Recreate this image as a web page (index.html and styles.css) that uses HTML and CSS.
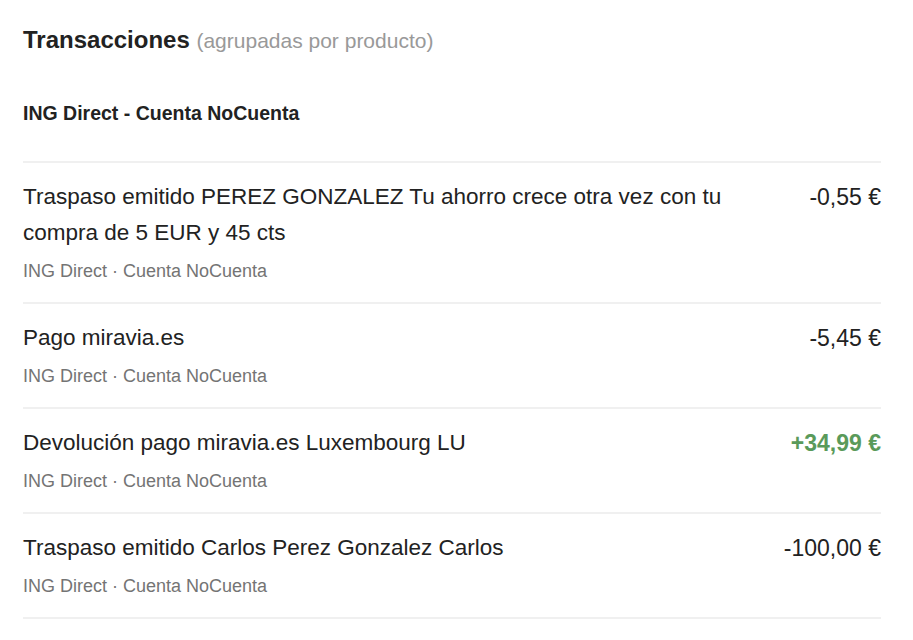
FILE: index.html
```html
<!doctype html>
<html lang="es">
    <head>
        <meta charset="UTF-8" />
        <meta name="viewport" content="width=device-width, initial-scale=1.0" />
        <title>Transacciones</title>
        <link rel="stylesheet" href="styles.css">
    </head>
    <body>
        <div class="container">
            <h2 class="title">
                Transacciones <span class="subtitle">(agrupadas por producto)</span>
            </h2>

            <div class="group">
                <h3 class="group-name">ING Direct - Cuenta NoCuenta</h3>

                <div class="tx-list">
                    <div class="tx">
                        <div class="tx-info">
                            <div class="tx-desc">
                                Traspaso emitido PEREZ GONZALEZ Tu ahorro crece otra vez con tu compra de 5 EUR y 45 cts
                            </div>
                            <div class="tx-meta">ING Direct · Cuenta NoCuenta</div>
                        </div>
                        <div class="tx-amount">-0,55 €</div>
                    </div>

                    <div class="tx">
                        <div class="tx-info">
                            <div class="tx-desc">Pago miravia.es</div>
                            <div class="tx-meta">ING Direct · Cuenta NoCuenta</div>
                        </div>
                        <div class="tx-amount">-5,45 €</div>
                    </div>

                    <div class="tx">
                        <div class="tx-info">
                            <div class="tx-desc">Devolución pago miravia.es Luxembourg LU</div>
                            <div class="tx-meta">ING Direct · Cuenta NoCuenta</div>
                        </div>
                        <div class="tx-amount positive">+34,99 €</div>
                    </div>

                    <div class="tx">
                        <div class="tx-info">
                            <div class="tx-desc">Traspaso emitido Carlos Perez Gonzalez Carlos</div>
                            <div class="tx-meta">ING Direct · Cuenta NoCuenta</div>
                        </div>
                        <div class="tx-amount">-100,00 €</div>
                    </div>
                </div>
            </div>
        </div>
    </body>
</html>
```

FILE: styles.css
```css
body {
    font-family: "Liberation Sans", Arial, Helvetica, sans-serif;
    margin: 0;
    padding: 0;
    background: white;
    color: #222;
}

.container {
    padding: 24px 32px 0 23px;
}

.title {
    margin: 0;
    font-size: 24px;
    line-height: 32px;
    font-weight: bold;
    color: #222;
}

.subtitle {
    font-size: 21px;
    font-weight: normal;
    color: #999;
}

.group-name {
    margin: 44px 0 0 0;
    font-size: 19.5px;
    line-height: 24px;
    font-weight: bold;
    color: #222;
}

.tx-list {
    margin-top: 36px;
    border-top: 2px solid #f0f0f0;
}

.tx {
    display: flex;
    justify-content: space-between;
    align-items: flex-start;
    gap: 40px;
    padding: 16px 0 19px 0;
    border-bottom: 2px solid #f0f0f0;
}

.tx-desc {
    font-size: 22.5px;
    line-height: 36px;
    color: #222;
    max-width: 720px;
}

.tx-meta {
    margin-top: 8px;
    font-size: 18px;
    line-height: 24px;
    color: #747474;
}

.tx-amount {
    font-size: 23px;
    line-height: 36px;
    white-space: nowrap;
    color: #222;
}

.tx-amount.positive {
    color: #5a9a5a;
    font-weight: bold;
}
```
